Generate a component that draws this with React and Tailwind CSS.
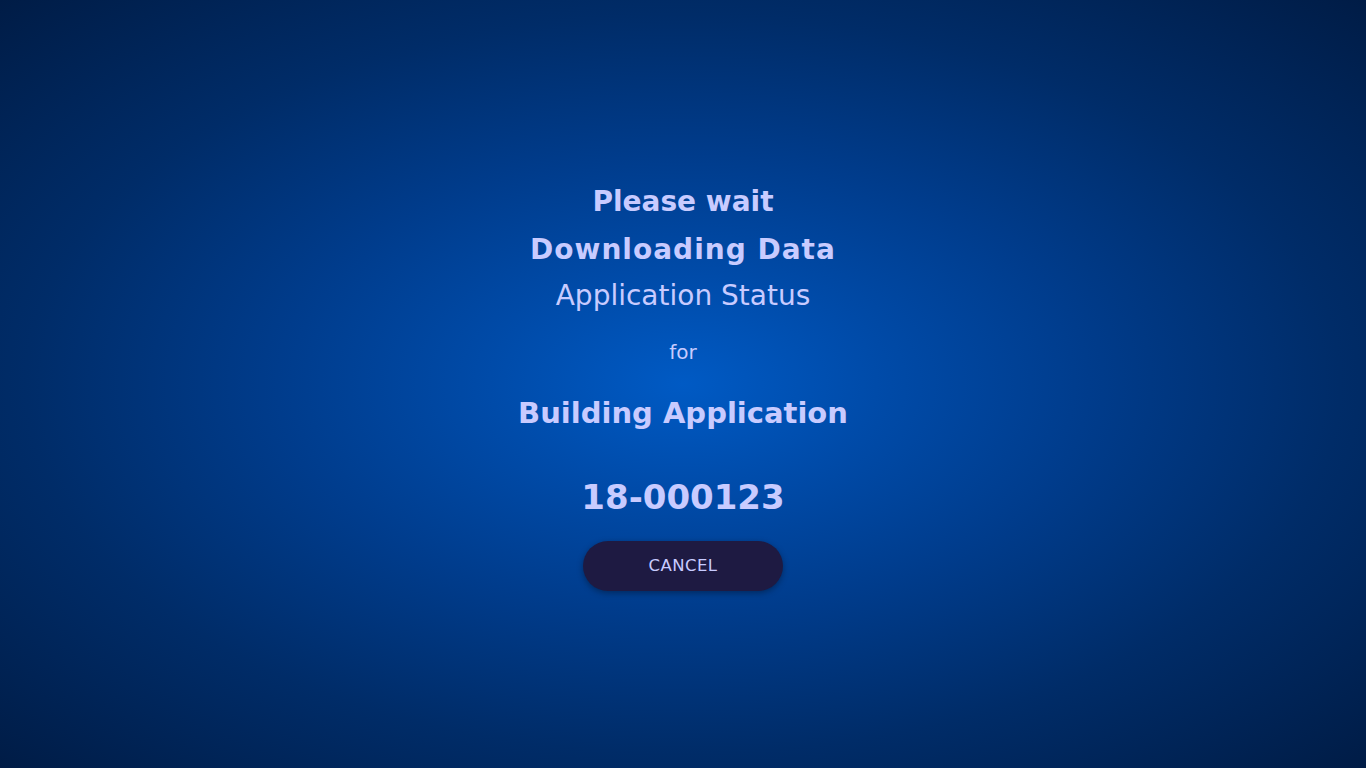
export default function App() {
    return (
        <div
            className="min-h-screen w-full flex flex-col items-center pt-[178px] text-[#c8cbff] bg-[radial-gradient(ellipse_at_center,#005ac4_0%,#004ba9_20%,#003c8c_42%,#002c68_68%,#001c46_100%)]"
            style={{ fontFamily: "'DejaVu Sans', Inter, sans-serif" }}
        >
            <div className="text-[28px] font-bold leading-[48px]">Please wait</div>
            <div className="text-[28px] font-bold leading-[48px] tracking-[1px]">Downloading Data</div>
            <div className="text-[28px] leading-[44px]">Application Status</div>
            <div className="mt-[19px] text-[20px] leading-[30px]">for</div>
            <div className="mt-[26px] text-[29px] font-bold leading-[40px]">Building Application</div>
            <div className="mt-[40px] text-[34px] font-bold leading-[48px]">18-000123</div>
            <button className="mt-[20px] w-[200px] h-[50px] rounded-full bg-[#1e1a42] text-[16.5px] font-medium tracking-wide shadow-[0_2px_6px_rgba(0,0,0,0.35)]">
                CANCEL
            </button>
        </div>
    );
}
